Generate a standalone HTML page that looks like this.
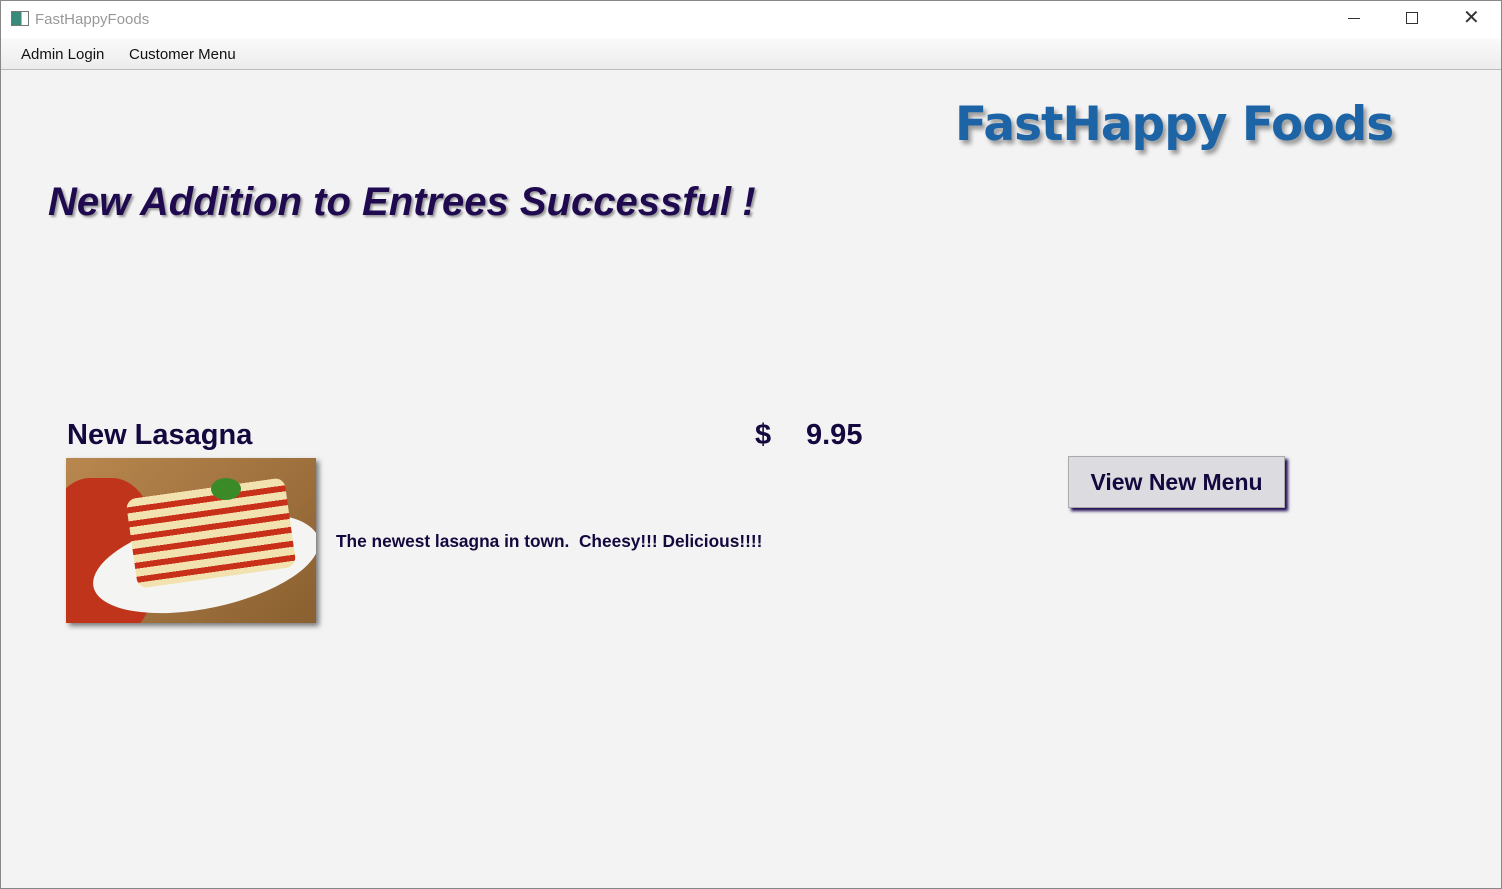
<!DOCTYPE html>
<html><head><style>
body{margin:0;width:1502px;height:889px;position:relative;overflow:hidden;background:#f3f3f3;font-family:"Liberation Sans",sans-serif}
.abs{position:absolute}
</style></head><body>
<div class="abs" style="left:0;top:0;width:1502px;height:38px;background:#fff"></div>
<div class="abs" style="left:11px;top:11px;width:16px;height:13px;border:1px solid #777;background:linear-gradient(90deg,#3a8a7a 60%,#fff 60%)"></div>
<div class="abs" style="left:35px;top:11px;font-size:15px;color:#999">FastHappyFoods</div>
<div class="abs" style="left:1348px;top:18px;width:12px;height:1px;background:#333"></div>
<div class="abs" style="left:1406px;top:12px;width:10px;height:10px;border:1px solid #333"></div>
<div class="abs" style="left:1463px;top:5px;font-size:20px;color:#333">✕</div>
<div class="abs" style="left:0;top:38px;width:1502px;height:31px;background:linear-gradient(#fafafa,#ececec);border-bottom:1px solid #bbb"></div>
<div class="abs" style="left:21px;top:46px;font-size:15px;color:#111">Admin Login</div>
<div class="abs" style="left:129px;top:46px;font-size:15px;color:#111">Customer Menu</div>
<div class="abs" style="left:0;top:0;width:1500px;height:887px;border:1px solid #888;pointer-events:none"></div>
<div class="abs" style="left:955px;top:97px;font-family:'DejaVu Sans',sans-serif;font-weight:bold;font-size:47px;color:#1c64a6;text-shadow:3px 4px 4px #999;letter-spacing:-1px">FastHappy Foods</div>
<div class="abs" style="left:48px;top:180px;font-size:40px;font-weight:bold;font-style:italic;color:#1f0a50;text-shadow:2px 2px 2px #999">New Addition to Entrees Successful !</div>
<div class="abs" style="left:67px;top:419px;font-size:29px;font-weight:bold;color:#14083e">New Lasagna</div>
<div class="abs" style="left:755px;top:419px;font-size:29px;font-weight:bold;color:#14083e">$</div>
<div class="abs" style="left:806px;top:419px;font-size:29px;font-weight:bold;color:#14083e">9.95</div>
<div class="abs" style="left:66px;top:458px;width:250px;height:165px;box-shadow:3px 3px 5px #777;background:linear-gradient(135deg,#b9874f,#8a6030);overflow:hidden">
 <div class="abs" style="left:-20px;top:20px;width:110px;height:160px;background:#c0341c;border-radius:40%"></div>
 <div class="abs" style="left:25px;top:60px;width:230px;height:90px;background:#f4f4f2;border-radius:50%;transform:rotate(-12deg)"></div>
 <div class="abs" style="left:65px;top:30px;width:160px;height:90px;background:repeating-linear-gradient(#f2e2b0 0 8px,#c8301a 8px 14px);border-radius:10px;transform:rotate(-8deg)"></div>
 <div class="abs" style="left:145px;top:20px;width:30px;height:22px;background:#3a8a28;border-radius:50%"></div>
</div>
<div class="abs" style="left:336px;top:531px;font-size:17.3px;font-weight:bold;color:#14083e">The newest lasagna in town.&nbsp; Cheesy!!! Delicious!!!!</div>
<div class="abs" style="left:1068px;top:456px;width:217px;height:52px;background:#dcdce0;border:1px solid #aaa;box-shadow:3px 3px 3px #1f0a50;box-sizing:border-box;font-size:23px;font-weight:bold;color:#14083e;text-align:center;line-height:50px">View New Menu</div>
</body></html>
